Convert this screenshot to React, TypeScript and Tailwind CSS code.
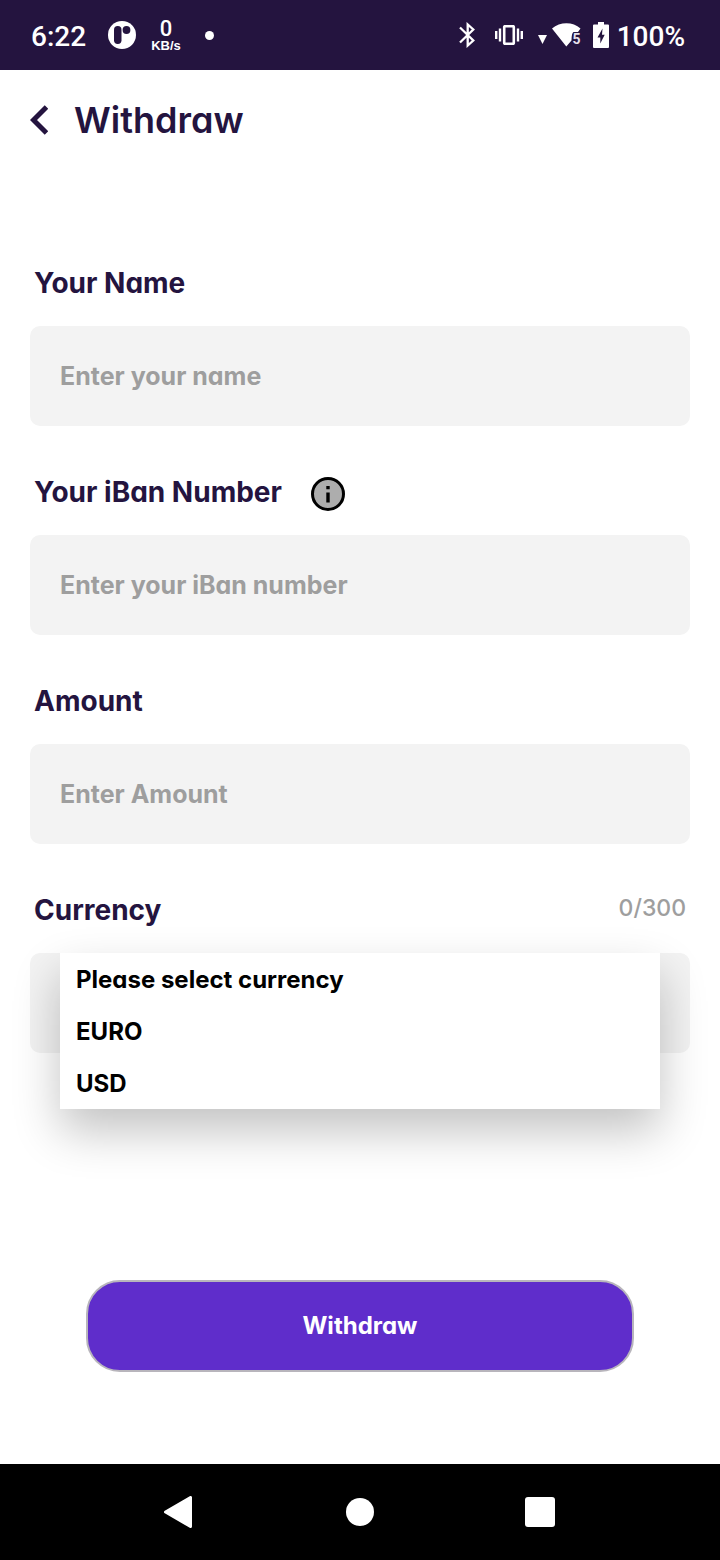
import type { ReactNode } from "react";

function StatusBar() {
  return (
    <div className="flex h-[70px] shrink-0 items-center justify-between bg-[#24143f] pr-[35px] pl-[31px] font-[Roboto,sans-serif] text-white">
      <div className="flex items-center">
        <span className="pt-1 text-[28px] leading-8 font-medium">6:22</span>
        <svg className="ml-[22px] size-7" viewBox="0 0 28 28" aria-hidden="true">
          <circle cx="14" cy="14" r="14" fill="#fff" />
          <rect x="6" y="5" width="7.500" height="18" rx="3.700" fill="#24143f" />
          <circle cx="18.500" cy="9" r="3.900" fill="#24143f" />
        </svg>
        <div className="ml-[15px] flex flex-col items-center pt-px">
          <span className="text-[22px] leading-5 font-medium">0</span>
          <span className="font-['Liberation_Sans',sans-serif] text-[13px] leading-[14px] font-bold">KB/s</span>
        </div>
        <span className="ml-6 size-[9px] rounded-full bg-white" />
      </div>
      <div className="flex items-center">
        <svg className="h-[26px] w-4" viewBox="0 0 16 26" fill="none" stroke="#fff" strokeWidth="2.300" aria-hidden="true">
          <path d="M1 5.500 14.300 18.500 8.700 23.500V2.500L14.300 7.500 1 20.500" />
        </svg>
        <svg className="ml-5 h-5 w-7" viewBox="0 0 28 20" aria-hidden="true">
          <rect x="9.200" y="1.200" width="9.600" height="17.600" rx="0.800" fill="none" stroke="#fff" strokeWidth="2.600" />
          <path d="M1.200 6v8M5 3.500v13M23 3.500v13M26.800 6v8" stroke="#fff" strokeWidth="2.400" />
        </svg>
        <svg className="mt-2 ml-[15px] h-[9px] w-[9px]" viewBox="0 0 9 9" aria-hidden="true">
          <path d="M0 0h9L4.500 9z" fill="#fff" />
        </svg>
        <div className="relative ml-[5px] h-6 w-[29px]">
          <svg className="size-full" viewBox="0 0 29 24" aria-hidden="true">
            <path d="M0 5.500C8-1.500 21-1.500 28.500 5.500L26 9H21.500Q19.500 10 19.500 17.500L14.300 23.500Z" fill="#fff" />
          </svg>
          <span className="absolute right-0 bottom-0 text-sm leading-4 font-bold text-[#e4dfea]">5</span>
        </div>
        <svg className="ml-3 h-[26px] w-4" viewBox="0 0 16 26" aria-hidden="true">
          <path d="M5 0h6v2.500h4q1 0 1 1V25q0 1-1 1H1q-1 0-1-1V3.500q0-1 1-1h4z" fill="#fff" />
          <path d="M9.500 6.500 4.500 15.500H7.300V21.500L11.700 12.700H9z" fill="#24143f" />
        </svg>
        <span className="ml-2 pt-1 text-[28px] leading-8 font-medium">100%</span>
      </div>
    </div>
  );
}

function InfoIcon() {
  return (
    <svg className="size-[34px]" viewBox="0 0 34 34" aria-hidden="true">
      <circle cx="17" cy="17" r="15.500" fill="#adadad" stroke="#000" strokeWidth="3" />
      <path d="M15.300 9h3.400v3.300h-3.400zM15.300 15.500h3.400v10h-3.400z" fill="#000" />
    </svg>
  );
}

interface FieldHeadProps {
  id: string;
  label: string;
  children?: ReactNode;
}

function FieldHead({ id, label, children }: FieldHeadProps) {
  return (
    <div className="flex h-[109px] items-center pt-[22px] pl-1">
      <label htmlFor={id} className="text-[28px] leading-9 font-bold text-[#24143f]">
        {label}
      </label>
      {children}
    </div>
  );
}

interface TextFieldProps extends FieldHeadProps {
  placeholder: string;
}

function TextField({ id, label, placeholder, children }: TextFieldProps) {
  return (
    <div>
      <FieldHead id={id} label={label}>
        {children}
      </FieldHead>
      <input
        id={id}
        type="text"
        placeholder={placeholder}
        className="block h-[100px] w-full rounded-[10px] bg-[#f3f3f3] px-[30px] text-[25px] font-bold text-black outline-none placeholder:text-[#9e9e9e]"
      />
    </div>
  );
}

function NavigationBar() {
  return (
    <nav className="flex h-24 shrink-0 items-center justify-center bg-black">
      <button type="button" aria-label="Back" className="flex w-[180px] justify-center pr-1">
        <svg className="h-8 w-7" viewBox="0 0 28 32" aria-hidden="true">
          <path d="M1.500 16 26.500 1.500V30.500Z" fill="#fff" stroke="#fff" strokeWidth="3" strokeLinejoin="round" />
        </svg>
      </button>
      <button type="button" aria-label="Home" className="flex w-[180px] justify-center">
        <span className="size-7 rounded-full bg-white" />
      </button>
      <button type="button" aria-label="Recent apps" className="flex w-[180px] justify-center">
        <span className="size-[30px] rounded-[3px] bg-white" />
      </button>
    </nav>
  );
}

export default function App() {
  return (
    <div className="flex min-h-screen flex-col bg-white font-[Inter,sans-serif] [font-feature-settings:'cv11']">
      <StatusBar />
      <header className="flex h-[100px] items-center pl-[30px]">
        <button type="button" aria-label="Go back">
          <svg className="h-[30px] w-[18px]" viewBox="0 0 18 30" aria-hidden="true">
            <path d="M16.500 2 3.500 15 16.500 28" fill="none" stroke="#24143f" strokeWidth="5" />
          </svg>
        </button>
        <h1 className="ml-[26px] text-4xl leading-10 font-semibold text-[#24143f]">Withdraw</h1>
      </header>
      <form className="flex grow flex-col px-[30px] pt-[47px]">
        <TextField id="name" label="Your Name" placeholder="Enter your name" />
        <TextField id="iban" label="Your iBan Number" placeholder="Enter your iBan number">
          <button type="button" aria-label="About iBan numbers" className="mt-1 ml-[29px]">
            <InfoIcon />
          </button>
        </TextField>
        <TextField id="amount" label="Amount" placeholder="Enter Amount" />
        <div>
          <FieldHead id="currency" label="Currency">
            <span className="mr-1 mb-1 ml-auto text-[23px] leading-8 font-medium text-[#9e9e9e]">0/300</span>
          </FieldHead>
          <div className="relative h-[100px] rounded-[10px] bg-[#f3f3f3]">
            <select
              id="currency"
              size={3}
              className="absolute inset-x-[30px] top-0 h-[156px] appearance-none overflow-hidden rounded-none bg-white text-2xl text-black shadow-[0_22px_44px_rgba(0,0,0,0.24)] outline-none"
            >
              <option className="flex h-[52px] items-center px-4 py-0 font-bold">Please select currency</option>
              <option className="flex h-[52px] items-center px-4 py-0 font-bold">EURO</option>
              <option className="flex h-[52px] items-center px-4 py-0 font-bold">USD</option>
            </select>
          </div>
        </div>
        <button
          type="submit"
          className="mx-14 mt-auto mb-[92px] h-[92px] rounded-[34px] border-2 border-[#b8b5bc] bg-[#5f2dcb] text-2xl font-bold text-white"
        >
          Withdraw
        </button>
      </form>
      <NavigationBar />
    </div>
  );
}
